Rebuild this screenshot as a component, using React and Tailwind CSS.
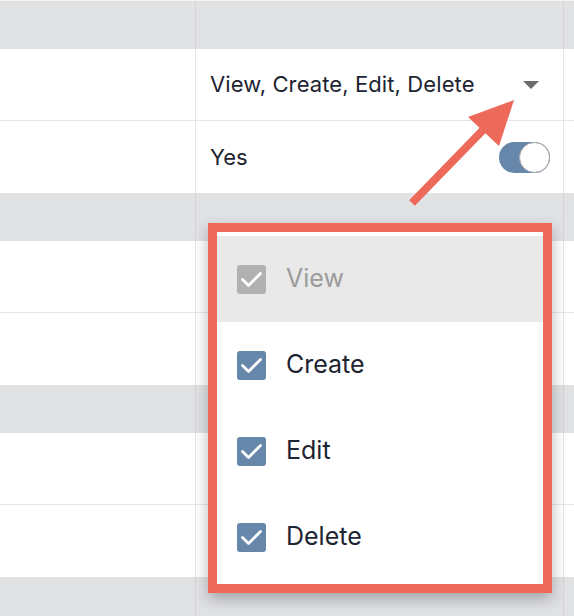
const GROUPS = [
  [{ value: 'View, Create, Edit, Delete', kind: 'select' }, { value: 'Yes', kind: 'toggle' }],
  [{ value: '', kind: 'blank' }, { value: '', kind: 'blank' }],
  [{ value: '', kind: 'blank' }, { value: '', kind: 'blank' }],
]

const OPTIONS = [
  { label: 'View', disabled: true },
  { label: 'Create' },
  { label: 'Edit' },
  { label: 'Delete' },
]

function HeaderRow() {
  return (
    <div className="flex h-[48px] bg-[#e1e2e4]">
      <div className="w-[196px] border-r border-[#d6d6d8]" />
      <div className="w-[368px] border-r border-[#d6d6d8]" />
      <div className="flex-1" />
    </div>
  )
}

function Cell({ cell }) {
  if (cell.kind === 'select') {
    return (
      <div className="flex h-full items-center justify-between pl-[14px] pr-[24px]">
        <span className="text-[22px] tracking-[0.1px] text-[#1e2431]">{cell.value}</span>
        <span className="h-0 w-0 border-x-[8px] border-t-[8px] border-x-transparent border-t-[#6b6b6b]" />
      </div>
    )
  }
  if (cell.kind === 'toggle') {
    return (
      <div className="flex h-full items-center justify-between pl-[14px] pr-[13px]">
        <span className="text-[22px] text-[#1e2431]">{cell.value}</span>
        <span className="relative flex h-[31px] w-[51px] items-center rounded-full bg-[#6686aa]">
          <span className="absolute right-0 h-[31px] w-[31px] rounded-full border border-[#a9a9a9] bg-white" />
        </span>
      </div>
    )
  }
  return null
}

function DataRow({ cell, last }) {
  return (
    <div className={`flex h-[72px] bg-white ${last ? '' : 'border-b border-[#e6e6e8]'}`}>
      <div className="w-[196px] border-r border-[#e6e6e8]" />
      <div className="w-[368px] border-r border-[#e6e6e8]">
        <Cell cell={cell} />
      </div>
      <div className="flex-1" />
    </div>
  )
}

function Arrow() {
  return (
    <svg className="pointer-events-none absolute left-0 top-0" width="574" height="616" viewBox="0 0 574 616">
      <line x1="412" y1="203" x2="484" y2="129" stroke="#ed6a5a" strokeWidth="8" strokeLinecap="butt" />
      <polygon points="514,100 468,117 499,146" fill="#ed6a5a" />
    </svg>
  )
}

function CheckMark() {
  return (
    <svg width="29" height="29" viewBox="0 0 29 29">
      <polyline
        points="5.5,14.5 11.5,20.5 23.5,8.5"
        fill="none"
        stroke="white"
        strokeWidth="2.8"
        strokeLinecap="round"
        strokeLinejoin="round"
      />
    </svg>
  )
}

function PermissionMenu() {
  return (
    <div className="absolute left-[208px] top-[223px] w-[344px] border-[9px] border-[#ed6a5a] bg-white shadow-[0_6px_14px_rgba(0,0,0,0.28)]">
      <div className="py-[4px]">
        {OPTIONS.map((opt) => (
          <div
            key={opt.label}
            className={`flex h-[86px] items-center gap-[20px] pl-[20px] ${opt.disabled ? 'bg-[#e9e9ea]' : 'bg-white'}`}
          >
            <span
              className={`flex h-[29px] w-[29px] items-center justify-center rounded-[3px] ${
                opt.disabled ? 'bg-[#b1b1b1]' : 'bg-[#6686aa]'
              }`}
            >
              <CheckMark />
            </span>
            <span className={`text-[25px] ${opt.disabled ? 'text-[#9b9b9b]' : 'text-[#1e2431]'}`}>
              {opt.label}
            </span>
          </div>
        ))}
      </div>
    </div>
  )
}

export default function App() {
  return (
    <div
      className="relative h-[616px] w-[574px] overflow-hidden bg-white"
      style={{ fontFamily: 'Inter, "Noto Sans", sans-serif' }}
    >
      <div className="h-[1px] bg-[#f4f4f5]" />
      {GROUPS.map((group, gi) => (
        <div key={gi}>
          <HeaderRow />
          <DataRow cell={group[0]} />
          <DataRow cell={group[1]} last />
        </div>
      ))}
      <HeaderRow />
      <Arrow />
      <PermissionMenu />
    </div>
  )
}
